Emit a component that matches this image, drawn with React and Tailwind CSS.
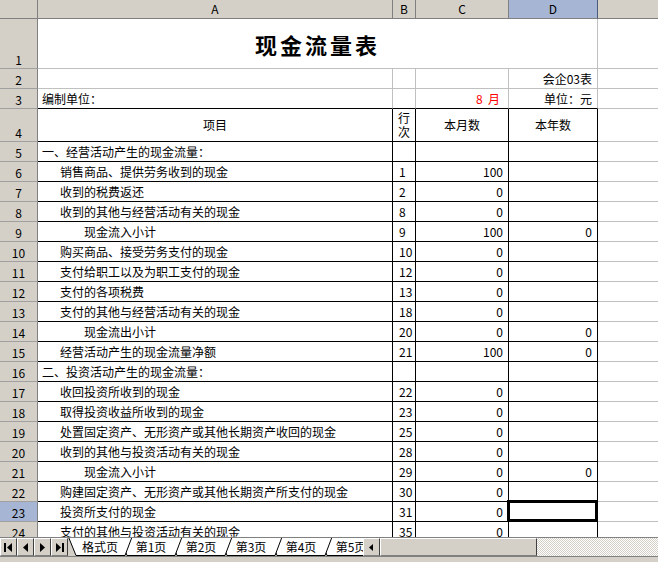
import React from 'react';

// column template shared by every sheet row: row head, A, B, C, D, E
const COLS = 'grid grid-cols-[38px_355px_23px_93px_89px_1fr]';

const rows = [
  { n: 5, a: '一、经营活动产生的现金流量：', ind: 0 },
  { n: 6, a: '销售商品、提供劳务收到的现金', ind: 1, b: '1', c: '100' },
  { n: 7, a: '收到的税费返还', ind: 1, b: '2', c: '0' },
  { n: 8, a: '收到的其他与经营活动有关的现金', ind: 1, b: '8', c: '0' },
  { n: 9, a: '现金流入小计', ind: 2, b: '9', c: '100', d: '0' },
  { n: 10, a: '购买商品、接受劳务支付的现金', ind: 1, b: '10', c: '0' },
  { n: 11, a: '支付给职工以及为职工支付的现金', ind: 1, b: '12', c: '0' },
  { n: 12, a: '支付的各项税费', ind: 1, b: '13', c: '0' },
  { n: 13, a: '支付的其他与经营活动有关的现金', ind: 1, b: '18', c: '0' },
  { n: 14, a: '现金流出小计', ind: 2, b: '20', c: '0', d: '0' },
  { n: 15, a: '经营活动产生的现金流量净额', ind: 1, b: '21', c: '100', d: '0' },
  { n: 16, a: '二、投资活动产生的现金流量：', ind: 0 },
  { n: 17, a: '收回投资所收到的现金', ind: 1, b: '22', c: '0' },
  { n: 18, a: '取得投资收益所收到的现金', ind: 1, b: '23', c: '0' },
  { n: 19, a: '处置固定资产、无形资产或其他长期资产收回的现金', ind: 1, b: '25', c: '0' },
  { n: 20, a: '收到的其他与投资活动有关的现金', ind: 1, b: '28', c: '0' },
  { n: 21, a: '现金流入小计', ind: 2, b: '29', c: '0', d: '0' },
  { n: 22, a: '购建固定资产、无形资产或其他长期资产所支付的现金', ind: 1, b: '30', c: '0' },
  { n: 23, a: '投资所支付的现金', ind: 1, b: '31', c: '0', sel: true },
  { n: 24, a: '支付的其他与投资活动有关的现金', ind: 1, b: '35', c: '0' },
];

const RowHead = ({ n, sel }) => (
  <div
    className={`flex items-end justify-center pb-[2px] border-r border-b border-r-[#808080] border-b-[#a0a0a0] ${
      sel ? 'bg-[#a6b5d3]' : 'bg-[#d4d0c8]'
    }`}
  >
    {n}
  </div>
);

const ColHead = ({ label, sel }) => (
  <div
    className={`flex items-center justify-center border-r border-b border-[#808080] ${
      sel ? 'bg-[#a6b5d3] border-r-[#4a5a7a]' : 'bg-[#d4d0c8]'
    }`}
  >
    {label}
  </div>
);

const Row = ({ n, a, ind, b, c, d, sel }) => {
  const pad = ind === 2 ? 'pl-[46px]' : ind === 1 ? 'pl-[22px]' : 'pl-[4px]';
  const cell = 'flex items-center border-r border-b border-black';
  return (
    <div className={`${COLS} h-[20px]`}>
      <RowHead n={n} sel={sel} />
      <div className={`${cell} ${pad} whitespace-nowrap`}>{a}</div>
      <div className={`${cell} pl-[6px]`}>{b}</div>
      <div className={`${cell} justify-end pr-[5px]`}>{c}</div>
      <div className={`${cell} relative justify-end pr-[5px]`}>
        {d}
        {sel && <div className="absolute -left-[2px] -top-[2px] -right-[1px] -bottom-[1px] border-[3px] border-black" />}
      </div>
      <div className="border-b border-[#c0c0c0]" />
    </div>
  );
};

const NavIcon = ({ kind }) => (
  <svg width="9" height="9" viewBox="0 0 9 9">
    {kind === 'first' && (
      <>
        <rect x="0" y="0" width="2" height="9" fill="#000" />
        <path d="M8 0 L3 4.5 L8 9 Z" fill="#000" />
      </>
    )}
    {kind === 'prev' && <path d="M7 0 L2 4.5 L7 9 Z" fill="#000" />}
    {kind === 'next' && <path d="M2 0 L7 4.5 L2 9 Z" fill="#000" />}
    {kind === 'last' && (
      <>
        <path d="M1 0 L6 4.5 L1 9 Z" fill="#000" />
        <rect x="7" y="0" width="2" height="9" fill="#000" />
      </>
    )}
  </svg>
);

const bevel = 'border border-t-white border-l-white border-b-[#808080] border-r-[#404040] bg-[#d4d0c8]';

const tabs = ['第1页', '第2页', '第3页', '第4页', '第5页'];

const TabBar = () => (
  <div className="h-[19px] flex bg-[#d4d0c8] border-t border-[#808080]">
    <div className="w-[68px] shrink-0 flex">
      {['first', 'prev', 'next', 'last'].map((k) => (
        <div key={k} className={`w-[17px] shrink-0 flex items-center justify-center ${bevel}`}>
          <NavIcon kind={k} />
        </div>
      ))}
    </div>
    <div className="relative w-[295px] shrink-0 overflow-hidden">
      <svg className="absolute inset-0" width="295" height="18" viewBox="0 0 295 18">
        {[4, 3, 2, 1, 0].map((i) => (
          <polygon
            key={i}
            points={`${52 + 50 * i},-1 ${114 + 50 * i},-1 ${107 + 50 * i},17.5 ${59 + 50 * i},17.5`}
            fill="#fff"
            stroke="#000"
            strokeWidth="1"
          />
        ))}
        <polygon points="0.5,-1 64,-1 57,17.5 8,17.5" fill="#fff" stroke="#000" strokeWidth="1" />
      </svg>
      <div className="relative flex h-full items-center whitespace-nowrap">
        <span className="w-[64px] shrink-0 text-center">格式页</span>
        {tabs.map((t, i) => (
          <span key={t} className={`w-[50px] shrink-0 text-center ${i === 0 ? '-ml-[6px]' : ''}`}>
            {t}
          </span>
        ))}
      </div>
    </div>
    <div className={`w-[17px] shrink-0 flex items-center justify-center ${bevel}`}>
      <svg width="5" height="7" viewBox="0 0 5 7">
        <path d="M4 0 L0 3.5 L4 7 Z" fill="#000" />
      </svg>
    </div>
    <div className={`w-[157px] shrink-0 ${bevel}`} />
    <div className="flex-1 bg-[repeating-conic-gradient(#d4d0c8_0_25%,#ffffff_0_50%)] bg-[length:2px_2px]" />
  </div>
);

export default function App() {
  return (
    <div className="w-[658px] h-[562px] flex flex-col overflow-hidden bg-white text-[12px] leading-none text-black font-['Noto_Sans_CJK_SC','Noto_Sans',sans-serif]">
      <div className="flex-1 overflow-hidden">
        {/* column letters */}
        <div className={`${COLS} h-[19px]`}>
          <div className="bg-[#d4d0c8] border-r border-b border-[#808080]" />
          <ColHead label="A" />
          <ColHead label="B" />
          <ColHead label="C" />
          <ColHead label="D" sel />
          <div className="bg-[#d4d0c8] border-b border-[#808080]" />
        </div>

        {/* row 1: title merged over A-D */}
        <div className={`${COLS} h-[50px]`}>
          <RowHead n={1} />
          <div className="col-span-4 flex items-center justify-center border-r border-b border-[#c0c0c0] text-[22px] font-bold tracking-[3px]">
            现金流量表
          </div>
          <div className="border-b border-[#c0c0c0]" />
        </div>

        {/* row 2 */}
        <div className={`${COLS} h-[20px]`}>
          <RowHead n={2} />
          <div className="border-r border-b border-[#c0c0c0]" />
          <div className="border-r border-b border-[#c0c0c0]" />
          <div className="border-r border-b border-[#c0c0c0]" />
          <div className="flex items-center justify-end pr-[5px] border-r border-b border-[#c0c0c0]">会企03表</div>
          <div className="border-b border-[#c0c0c0]" />
        </div>

        {/* row 3 */}
        <div className={`${COLS} h-[20px]`}>
          <RowHead n={3} />
          <div className="flex items-center pl-[4px] border-r border-b border-r-[#c0c0c0] border-b-black">编制单位：</div>
          <div className="border-r border-b border-r-[#c0c0c0] border-b-black" />
          <div className="flex items-center justify-end pr-[8px] border-r border-b border-r-[#c0c0c0] border-b-black text-[#ff0000]">
            8&nbsp;&nbsp;月
          </div>
          <div className="flex items-center justify-end pr-[5px] border-r border-b border-r-[#c0c0c0] border-b-black">
            单位：元
          </div>
          <div className="border-b border-[#c0c0c0]" />
        </div>

        {/* row 4: table header */}
        <div className={`${COLS} h-[33px]`}>
          <RowHead n={4} />
          <div className="flex items-center justify-center border-r border-b border-black">项目</div>
          <div className="flex flex-col items-center justify-center leading-[14px] border-r border-b border-black">
            <span>行</span>
            <span>次</span>
          </div>
          <div className="flex items-center justify-center border-r border-b border-black">本月数</div>
          <div className="flex items-center justify-center border-r border-b border-black">本年数</div>
          <div className="border-b border-[#c0c0c0]" />
        </div>

        {rows.map((r) => (
          <Row key={r.n} {...r} />
        ))}
      </div>
      <TabBar />
      <div className="h-[6px] bg-[#d4d0c8] border-t border-[#808080]" />
    </div>
  );
}
